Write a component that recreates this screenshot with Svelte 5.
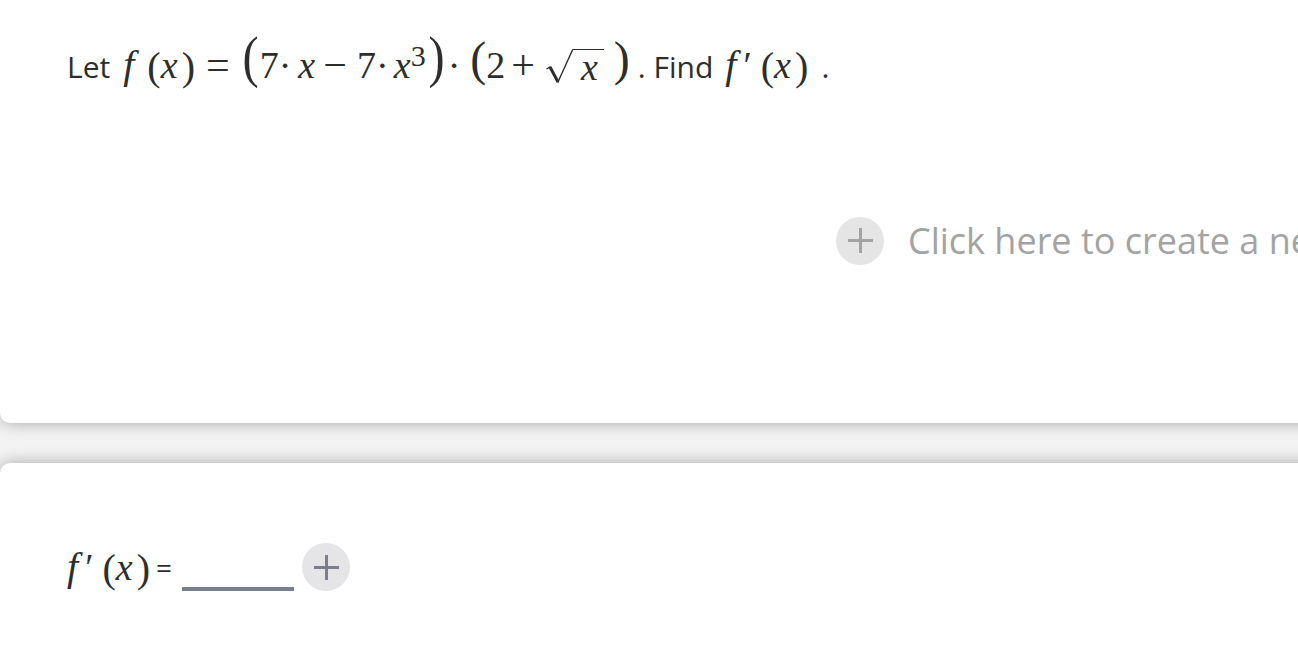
<script lang="ts">
  // Placeholder shown beside the "add" button; runs off the right edge of the page.
  const hint = "Click here to create a new note";
</script>

{#snippet plus(muted: boolean)}
  <button class="add" class:muted aria-label="Add">
    <svg viewBox="0 0 25 25" width="25" height="25" aria-hidden="true">
      <path d="M12.5 0v25M0 12.5h25" fill="none" stroke="currentColor" stroke-width="3" />
    </svg>
  </button>
{/snippet}

{#snippet derivative()}
  <i class="fn">f</i><span class="prime">′</span><span class="paren p-open">(</span><i class="var">x</i><span class="paren p-close">)</span>
{/snippet}

<main class="page">
  <section class="card question">
    <p class="statement">
      <span class="word">Let</span>
      <span class="math first">
        <i class="fn">f</i>
        <span class="paren fx">(</span><i class="var">x</i><span class="paren p-close">)</span>
        <span class="eq">=</span>
        <span class="big big-open">(</span>
        <span class="num">7</span><span class="dot">·</span><i class="var">x</i>
        <span class="minus">−</span>
        <span class="num">7</span><span class="dot near">·</span><i class="var">x</i><sup>3</sup>
        <span class="big">)</span>
        <span class="dot mid">·</span>
        <span class="tall open">(</span>
        <span class="num">2</span>
        <span class="plus">+</span>
        <span class="root">
          <svg viewBox="0 0 27 36" width="27" height="36" aria-hidden="true">
            <path d="M0.5 20L4 18L12 33L26.5 1H27" fill="none" stroke="#2b2e2b" stroke-width="1.4" />
            <path d="M4 18L12 33" fill="none" stroke="#2b2e2b" stroke-width="3" />
          </svg>
          <span class="radicand"><i class="var">x</i></span>
        </span>
        <span class="tall close">)</span>
      </span>
      <span class="word after">. Find</span>
      <span class="math second">
        {@render derivative()}
      </span>
      <span class="word stop">.</span>
    </p>
    <div class="new-row">
      {@render plus(true)}
      <span class="hint">{hint}</span>
    </div>
  </section>

  <section class="card answer">
    <div class="answer-row">
      <span class="math">
        {@render derivative()}
      </span>
      <span class="equals">=</span>
      <span class="blank"></span>
      {@render plus(false)}
    </div>
  </section>
</main>

<style>
  :global(body) {
    background: #f3f3f3;
    overflow: hidden;
    font-family: "Open Sans", sans-serif;
    color: #2b2e2b;
  }
  .page {
    height: 646px;
    overflow: hidden;
    display: flex;
    flex-direction: column;
    gap: 40px;
  }
  .card {
    background: #fff;
    width: calc(100% + 40px);
    border-radius: 10px;
    box-shadow: 0 0 16px rgba(0, 0, 0, 0.32);
    box-sizing: border-box;
  }
  .question {
    height: 443px;
    margin-top: -20px;
    padding: 50px 0 0 67px;
  }
  .answer {
    flex: 1;
    margin-bottom: -20px;
    padding: 80px 0 0 67px;
  }
  .statement {
    margin: 0;
    height: 72px;
    display: flex;
    align-items: center;
    white-space: nowrap;
    font-size: 30px;
  }
  .math {
    display: inline-flex;
    align-items: center;
    font-family: "Liberation Serif", serif;
    font-size: 38px;
    line-height: 1;
  }
  .first {
    margin: 0 0 2px 13px;
  }
  .second {
    margin: 0 0 2px 12px;
  }
  .fn {
    font-size: 40px;
  }
  .var {
    font-size: 38px;
    width: 20px;
  }
  .prime {
    margin-left: 7px;
  }
  .paren {
    font-size: 40px;
    margin-top: 4px;
  }
  .p-open {
    margin-left: 9px;
  }
  .fx {
    margin-left: 13px;
  }
  .p-close {
    margin-left: 1px;
  }
  .eq {
    font-size: 42px;
    margin: 0 13px 0 11px;
  }
  .big {
    font-size: 57px;
    margin: 0 -2px 18px;
    transform: scaleX(0.85);
  }
  .big-open {
    margin-right: 0;
  }
  .dot {
    margin: 0 7px 0 0;
  }
  .near {
    margin-right: 5px;
  }
  .minus {
    font-size: 42px;
    margin: 0 10px 0 5px;
  }
  sup {
    font-size: 30px;
    line-height: 1;
    align-self: flex-start;
    margin: 13px 3px 0 -3px;
  }
  .mid {
    margin: 0 10px 0 4px;
  }
  .tall {
    font-size: 48px;
    margin-bottom: 12px;
  }
  .plus {
    font-size: 42px;
    margin: 0 11px 0 6px;
  }
  .root {
    display: inline-flex;
    align-items: flex-start;
    margin-top: 4px;
  }
  .radicand {
    border-top: 1.5px solid #2b2e2b;
    padding: 0 6px 0 8px;
    height: 34px;
    line-height: 34px;
  }
  .close {
    margin-left: 10px;
  }
  .after {
    margin-left: 8px;
  }
  .stop {
    margin-left: 13px;
  }
  .new-row {
    display: flex;
    align-items: center;
    gap: 24px;
    margin: 114px 0 0 769px;
    white-space: nowrap;
  }
  .hint {
    font-size: 36px;
    color: #a3a3a3;
  }
  .add {
    width: 48px;
    height: 48px;
    flex: none;
    padding: 0;
    border: 0;
    border-radius: 50%;
    background: #e5e5e8;
    color: #7b7e8e;
    display: flex;
    align-items: center;
    justify-content: center;
  }
  .add.muted {
    background: #e5e5e5;
    color: #a3a3a3;
  }
  .answer-row {
    display: flex;
    align-items: center;
    height: 48px;
  }
  .equals {
    font-size: 28px;
    margin-left: 6px;
  }
  .blank {
    width: 112px;
    height: 4px;
    background: #7b7e8e;
    align-self: flex-end;
    margin: 0 8px 0 10px;
  }
</style>
